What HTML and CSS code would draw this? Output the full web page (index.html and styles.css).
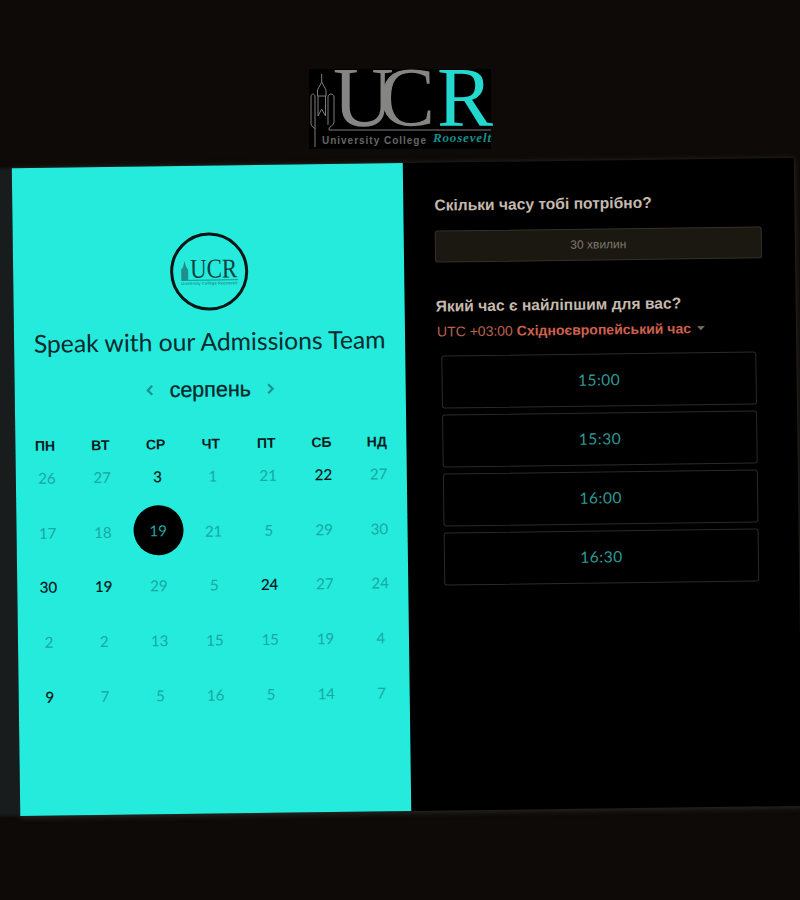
FILE: index.html
```html
<!DOCTYPE html>
<html lang="en">
<head>
    <meta charset="UTF-8">
    <meta name="viewport" content="width=device-width, initial-scale=1.0">
    <title>Speak with our Admissions Team</title>
    <link rel="stylesheet" href="styles.css">
</head>
<body>
    <header class="brand">
        <svg class="brand-logo" width="182" height="80" viewBox="0 0 182 80">
            <rect width="182" height="80" fill="#000"/>
            <path d="M12.7 5V13M12.7 13L8.5 21V27M12.7 13L17 21V27M8.5 27H17M9 27V47L12.7 40L16.5 47V27M2 28C2 24 6 24 6 28V78M2 28V55C2 58 6 58 6 60M19 28C19 24 25 24 25 28V53C25 57 20 57 20 60V61H182M19 28V56" fill="none" stroke="#7c7d7e" stroke-width="1"/>
            <text class="logo-uc" x="24 70" y="57">UC</text>
            <text class="logo-r" x="128" y="57">R</text>
            <text class="logo-sub" x="13" y="75" textLength="104">University College</text>
            <text class="logo-sub-r" x="124" y="73" textLength="58">Roosevelt</text>
        </svg>
    </header>

    <main class="card">
        <section class="left-panel">
            <div class="round-logo">
                <svg width="64" height="32" viewBox="0 0 64 32">
                    <path d="M4 25V14L6 11L7.5 5L9 11L11 14V25Z" fill="#1f8f8b"/>
                    <path d="M11 24.5H61" stroke="#0b5f5c" stroke-width="0.6"/>
                    <text class="mini-uc" x="13" y="22" textLength="47" lengthAdjust="spacingAndGlyphs">UCR</text>
                    <text class="mini-sub" x="4" y="29" textLength="56">University College Roosevelt</text>
                </svg>
            </div>
            <h1 class="team-title">Speak with our Admissions Team</h1>
            <div class="month-row">
                <svg class="chevron" width="8" height="12" viewBox="0 0 8 12"><path d="M6.5 1.5L2 6L6.5 10.5" fill="none" stroke="#14928f" stroke-width="2.2"/></svg>
                <span class="month-name">серпень</span>
                <svg class="chevron" width="8" height="12" viewBox="0 0 8 12"><path d="M1.5 1.5L6 6L1.5 10.5" fill="none" stroke="#14928f" stroke-width="2.2"/></svg>
            </div>
            <div class="weekdays">
                <div class="weekday">ПН</div><div class="weekday">ВТ</div><div class="weekday">СР</div><div class="weekday">ЧТ</div><div class="weekday">ПТ</div><div class="weekday">СБ</div><div class="weekday">НД</div>
            </div>
            <div class="days">
                <div class="day">26</div><div class="day">27</div><div class="day open">3</div><div class="day">1</div><div class="day">21</div><div class="day open">22</div><div class="day">27</div>
                <div class="day">17</div><div class="day">18</div><div class="day picked"><span>19</span></div><div class="day">21</div><div class="day">5</div><div class="day">29</div><div class="day">30</div>
                <div class="day open">30</div><div class="day open">19</div><div class="day">29</div><div class="day">5</div><div class="day open">24</div><div class="day">27</div><div class="day">24</div>
                <div class="day">2</div><div class="day">2</div><div class="day">13</div><div class="day">15</div><div class="day">15</div><div class="day">19</div><div class="day">4</div>
                <div class="day open">9</div><div class="day">7</div><div class="day">5</div><div class="day">16</div><div class="day">5</div><div class="day">14</div><div class="day">7</div>
            </div>
        </section>

        <section class="right-panel">
            <h2 class="question">Скільки часу тобі потрібно?</h2>
            <div class="duration">30 хвилин</div>
            <h2 class="question question-time">Який час є найліпшим для вас?</h2>
            <div class="timezone">UTC +03:00 <strong>Східноєвропейський час</strong><span class="caret"></span></div>
            <ul class="slots">
                <li>15:00</li>
                <li>15:30</li>
                <li>16:00</li>
                <li>16:30</li>
            </ul>
        </section>
    </main>
</body>
</html>
```

FILE: styles.css
```css
html, body {
    height: 100%;
}

body {
    margin: 0;
    padding: 0;
    overflow: hidden;
    background-color: #0d0a07;
    font-family: "Liberation Sans", Arial, sans-serif;
}

.brand {
    display: flex;
    justify-content: center;
    padding-top: 69px;
    height: 91px;
}

.brand-logo {
    display: block;
    overflow: visible;
}

.logo-uc, .logo-r {
    font-family: "Liberation Serif", serif;
    font-size: 84px;
}

.logo-uc {
    fill: #858583;
}

.logo-r {
    fill: #22d8cf;
}

.logo-sub {
    font-family: "Liberation Sans", sans-serif;
    font-size: 10px;
    font-weight: bold;
    fill: #666664;
}

.logo-sub-r {
    font-family: "Liberation Serif", serif;
    font-size: 13px;
    font-style: italic;
    font-weight: bold;
    fill: #14908b;
}

.card {
    display: flex;
    width: 782px;
    height: 648px;
    margin-left: 16px;
    margin-top: 3px;
    background-color: #000;
    transform: rotate(-0.75deg);
    box-shadow: -24px 0 3px #181c1c, 0 1px 6px rgba(70, 68, 62, 0.7);
}

.left-panel {
    width: 391px;
    flex-shrink: 0;
    box-sizing: border-box;
    padding-top: 67px;
    background-color: #24ebdc;
    text-align: center;
}

.round-logo {
    display: flex;
    align-items: center;
    justify-content: center;
    width: 78px;
    height: 78px;
    box-sizing: border-box;
    margin: 0 auto;
    border: 3px solid #0a1414;
    border-radius: 50%;
}

.mini-uc {
    font-family: "Liberation Serif", serif;
    font-size: 27px;
    fill: #0c3f40;
}

.mini-sub {
    font-family: "Liberation Sans", sans-serif;
    font-size: 4px;
    fill: #136a68;
}

.team-title {
    margin: 13px 0 0;
    font-family: Lato, sans-serif;
    font-size: 24.7px;
    line-height: 36px;
    font-weight: 400;
    color: #0a2a2e;
}

.month-row {
    display: flex;
    align-items: center;
    justify-content: center;
    gap: 16px;
    margin-top: 15px;
    height: 30px;
}

.month-name {
    font-size: 21.5px;
    color: #06262a;
    -webkit-text-stroke: 0.3px #06262a;
}

.weekdays, .days {
    display: grid;
    grid-template-columns: repeat(7, 55.3px);
    justify-content: center;
}

.weekdays {
    margin-top: 32px;
}

.weekday {
    height: 14px;
    font-size: 14px;
    font-weight: bold;
    line-height: 14px;
    color: #0b1c1e;
}

.days {
    grid-auto-rows: 50px;
    row-gap: 4.7px;
    padding-left: 3px;
}

.day {
    display: flex;
    align-items: center;
    justify-content: center;
    font-family: Lato, sans-serif;
    font-size: 15px;
    color: #17a8a2;
}

.day.open {
    color: #041214;
    -webkit-text-stroke: 0.2px #041214;
}

.day.picked span {
    display: flex;
    align-items: center;
    justify-content: center;
    width: 50px;
    height: 50px;
    margin-top: -2px;
    border-radius: 50%;
    background-color: #000;
    color: #1fa9a4;
}

.right-panel {
    flex: 1;
    box-sizing: border-box;
    padding: 33px 33px 0 31px;
}

.question {
    margin: 0;
    font-size: 15.6px;
    line-height: 20px;
    font-weight: bold;
    color: #c4b9ac;
}

.duration {
    height: 30px;
    margin-top: 15px;
    border: 1px solid #35312a;
    border-radius: 3px;
    background-color: #1b1711;
    font-size: 12px;
    line-height: 30px;
    text-align: center;
    color: #7f786c;
}

.question-time {
    margin-top: 34px;
}

.timezone {
    margin-top: 5px;
    padding-left: 1px;
    font-size: 14px;
    line-height: 20px;
    color: #bb604f;
}

.timezone strong {
    color: #d0604d;
}

.caret {
    display: inline-block;
    margin-left: 6px;
    margin-bottom: 3px;
    border-top: 4px solid #6e6a64;
    border-left: 4px solid transparent;
    border-right: 4px solid transparent;
}

.slots {
    list-style-type: none;
    margin: 14px 7px 0 5px;
    padding: 0;
}

.slots li {
    box-sizing: border-box;
    height: 53px;
    margin-bottom: 6px;
    border: 1px solid #2a2a2a;
    border-radius: 3px;
    font-family: Lato, sans-serif;
    font-size: 15.5px;
    letter-spacing: 0.5px;
    line-height: 51px;
    text-align: center;
    color: #2e9a95;
}
```
